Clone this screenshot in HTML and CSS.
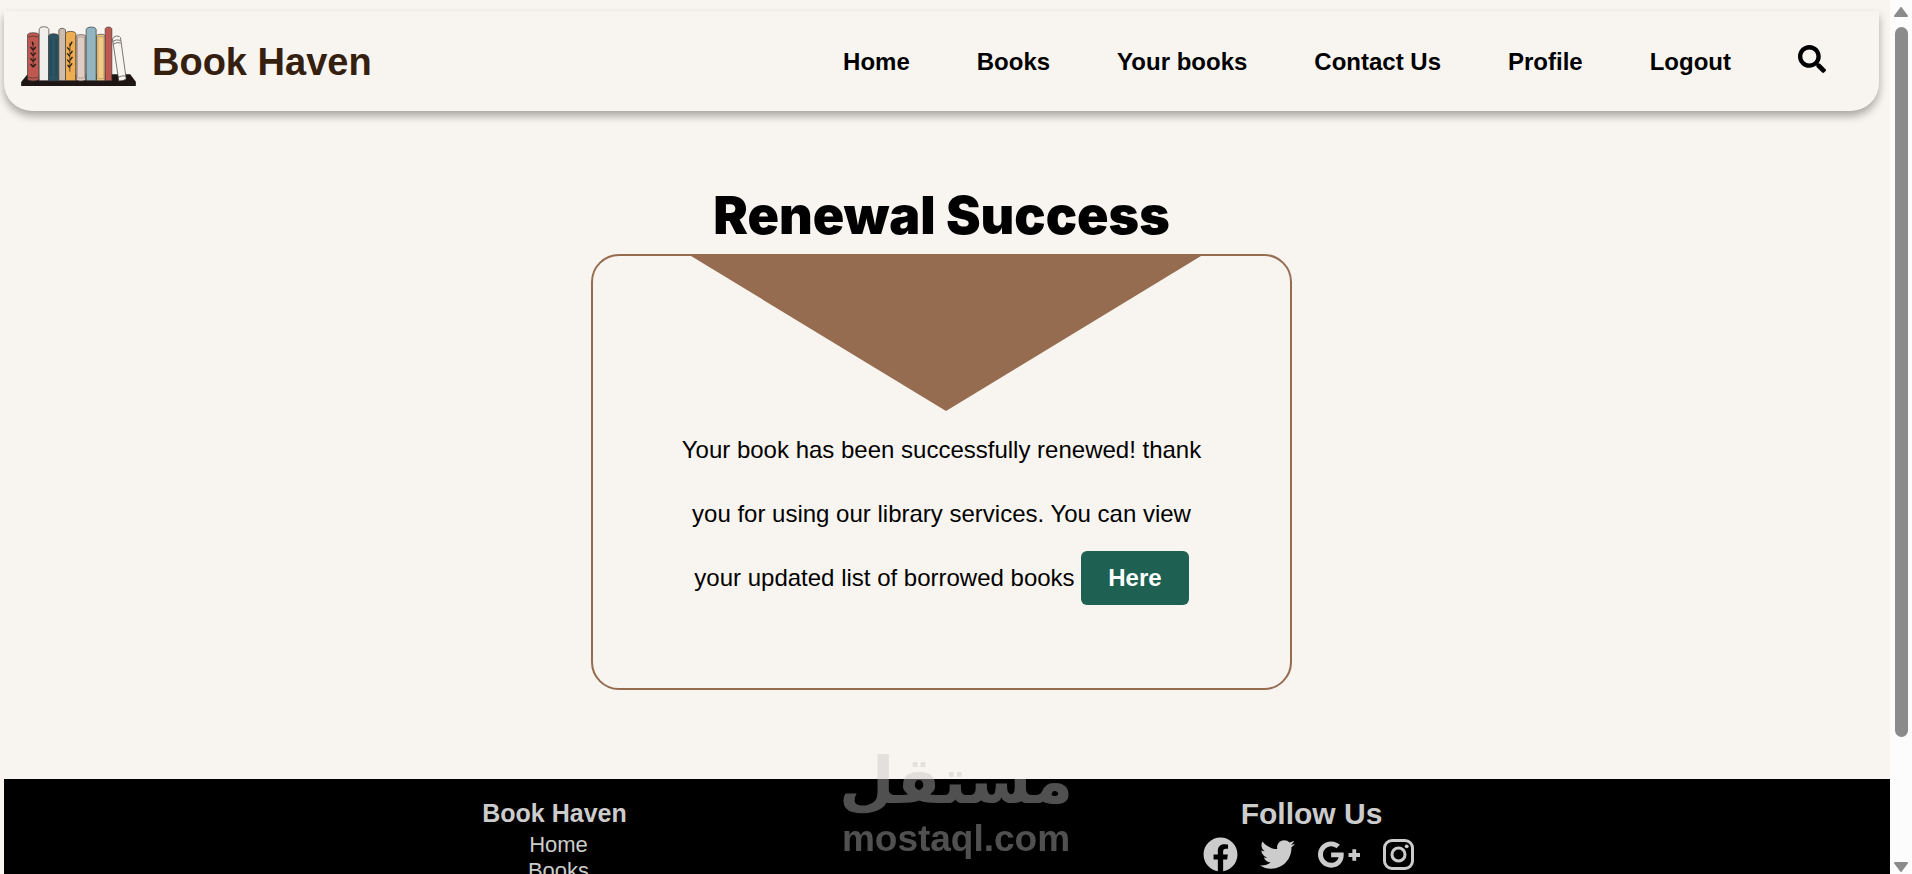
FILE: index.html
```html
<!DOCTYPE html>
<html lang="en">
<head>
    <meta charset="UTF-8">
    <meta name="viewport" content="width=device-width, initial-scale=1.0">
    <title>Book Haven - Renewal Success</title>
    <link rel="stylesheet" href="styles.css">
</head>
<body>
<div class="page">
    <header class="navbar">
        <a class="brand" href="#">
            <svg class="logo" viewBox="60 75 350 186" aria-hidden="true">
                <path d="M82 223H390L407 245V258H63V246Z" fill="#1d1615"/>
                <g stroke="#3b3534" stroke-width="2">
                    <path d="M82 104Q84 98 99 98T117 104V238Q112 243 99 243T82 238Z" fill="#bf5850"/>
                    <path d="M117 88Q118 80 131 80T146 88V242H117Z" fill="#f1efec"/>
                    <path d="M145 108Q147 101 160 101T176 108V243H145Z" fill="#2b5260"/>
                    <path d="M176 90Q178 85 186 85T196 90V242H176Z" fill="#cbbcae"/>
                    <path d="M196 100Q198 94 211 94T227 100V242H196Z" fill="#eead50"/>
                    <path d="M228 108Q230 104 242 104T257 108V240Q252 243 242 243T228 240Z" fill="#ddcdc5"/>
                    <path d="M258 88Q260 81 273 81T288 88V242H258Z" fill="#92b5c1"/>
                    <path d="M289 107Q291 103 302 103T315 107V242H289Z" fill="#f2cc82"/>
                    <path d="M315 86Q317 81 325 81T335 86V242H315Z" fill="#bf5850"/>
                    <path d="M337 117Q341 108 350 108T361 113L378 236Q374 242 356 243Z" fill="#f8f5f1"/>
                </g>
                <g fill="none" stroke="#3b3534" stroke-width="2">
                    <path d="M84 111Q99 106 115 111M84 232Q99 237 115 232M338 124Q348 117 361 121M340 132Q350 125 362 129M353 232Q364 226 376 228"/>
                    <path d="M232 111H253V234H232ZM293 110H311V236H293Z" stroke="#a58d74"/>
                    <path d="M152 118V228M168 118V228" stroke="#16404d"/>
                </g>
                <g fill="none" stroke="#241b18" stroke-width="4">
                    <path d="M99 128V202M209 128V215" stroke-width="2"/>
                    <path d="M99 135L96 125M99 150L91 141M99 150L107 141M99 167L91 158M99 167L107 158M99 184L91 175M99 184L107 175M99 201L91 192M99 201L107 192"/>
                    <path d="M209 138L216 125M209 151L201 142M209 163L217 153M209 169L201 160M209 181L217 171M209 188L201 179M209 199L216 190M209 203L202 195"/>
                </g>
            </svg>
            <span>Book Haven</span>
        </a>
        <nav class="nav-links">
            <a href="#">Home</a>
            <a href="#">Books</a>
            <a href="#">Your books</a>
            <a href="#">Contact Us</a>
            <a href="#">Profile</a>
            <a href="#">Logout</a>
            <a class="search" href="#" aria-label="Search">
                <svg viewBox="0 0 512 512"><path d="M505 442.7L405.3 343c-4.5-4.5-10.6-7-17-7H372c27.6-35.3 44-79.7 44-128C416 93.1 322.9 0 208 0S0 93.1 0 208s93.1 208 208 208c48.3 0 92.7-16.4 128-44v16.3c0 6.4 2.5 12.5 7 17l99.7 99.7c9.4 9.4 24.6 9.4 33.9 0l28.3-28.3c9.4-9.4 9.4-24.6.1-34zM208 336c-70.7 0-128-57.2-128-128 0-70.7 57.2-128 128-128 70.7 0 128 57.2 128 128 0 70.7-57.2 128-128 128z"/></svg>
            </a>
        </nav>
    </header>

    <main class="content">
        <h1>Renewal Success</h1>
        <section class="envelope">
            <div class="flap"></div>
            <p>Your book has been successfully renewed! thank you for using our library services. You can view your updated list of borrowed books <a class="here-btn" href="#">Here</a></p>
        </section>
    </main>

    <footer class="footer">
        <div class="footer-links">
            <h3>Book Haven</h3>
            <a href="#">Home</a>
            <a href="#">Books</a>
        </div>
        <div class="follow">
            <h2>Follow Us</h2>
            <div class="social">
                <a href="#" aria-label="Facebook">
                    <svg width="35" height="35" viewBox="0 0 512 512"><path d="M504 256C504 119 393 8 256 8S8 119 8 256c0 123.78 90.69 226.38 209.25 245V327.69h-63V256h63v-54.64c0-62.15 37-96.48 93.67-96.48 27.14 0 55.52 4.84 55.52 4.84v61h-31.28c-30.8 0-40.41 19.12-40.41 38.73V256h68.78l-11 71.69h-57.78V501C413.31 482.38 504 379.78 504 256z"/></svg>
                </a>
                <a href="#" aria-label="Twitter">
                    <svg width="35" height="35" viewBox="0 0 512 512"><path d="M459.37 151.716c.325 4.548.325 9.097.325 13.645 0 138.72-105.583 298.558-298.558 298.558-59.452 0-114.68-17.219-161.137-47.106 8.447.974 16.568 1.299 25.34 1.299 49.055 0 94.213-16.568 130.274-44.832-46.132-.975-84.792-31.188-98.112-72.772 6.498.974 12.995 1.624 19.818 1.624 9.421 0 18.843-1.3 27.614-3.573-48.081-9.747-84.143-51.98-84.143-102.985v-1.299c13.969 7.797 30.214 12.67 47.431 13.319-28.264-18.843-46.781-51.005-46.781-87.391 0-19.492 5.197-37.36 14.294-52.954 51.655 63.675 129.3 105.258 216.365 109.807-1.624-7.797-2.599-15.918-2.599-24.04 0-57.828 46.782-104.934 104.934-104.934 30.213 0 57.502 12.67 76.67 33.137 23.715-4.548 46.456-13.32 66.599-25.34-7.798 24.366-24.366 44.833-46.132 57.827 21.117-2.273 41.584-8.122 60.426-16.243-14.292 20.791-32.161 39.308-52.628 54.253z"/></svg>
                </a>
                <a href="#" aria-label="Google Plus">
                    <svg width="44" height="35" viewBox="0 0 640 512"><path d="M386.061 228.496c1.834 9.692 3.143 19.384 3.143 31.956C389.204 370.205 315.599 448 204.8 448c-106.084 0-192-85.915-192-192s85.916-192 192-192c51.864 0 95.083 18.859 128.611 50.292l-52.126 50.03c-14.145-13.621-39.028-29.599-76.485-29.599-65.484 0-118.92 54.221-118.92 121.277 0 67.056 53.436 121.277 118.92 121.277 75.961 0 104.513-54.745 108.965-82.773H204.8v-66.009h181.261zm185.406 6.437V179.2h-56.001v55.733h-55.733v56.001h55.733v55.733h56.001v-55.733H627.2v-56.001h-55.733z"/></svg>
                </a>
                <a href="#" aria-label="Instagram">
                    <svg width="31" height="35" viewBox="0 0 31 35"><g fill="none" stroke="#ccc" stroke-width="3"><rect x="1.5" y="3.5" width="28" height="28" rx="7.5"/><circle cx="15.5" cy="17.5" r="6.5"/></g><circle cx="23.7" cy="9.3" r="1.9"/></svg>
                </a>
            </div>
        </div>
    </footer>
</div>

<div class="scrollbar" aria-hidden="true">
    <svg viewBox="0 0 14 10"><path d="M7 1L13 9H1Z"/></svg>
    <div class="track"><div class="thumb"></div></div>
    <svg viewBox="0 0 14 10"><path d="M7 9L13 1H1Z"/></svg>
</div>

<div class="watermark">
    <span class="watermark-ar" lang="ar">مستقل</span>
    <span class="watermark-en">mostaql.com</span>
</div>
</body>
</html>
```
FILE: styles.css
```css
* {
    box-sizing: border-box;
}
body {
    margin: 0;
    height: 100vh;
    display: flex;
    overflow: hidden;
    background-color: #f8f4ef;
    font-family: Arial, "Liberation Sans", sans-serif;
    color: #000;
}
a {
    color: inherit;
    text-decoration: none;
}
.page {
    flex: 1;
    height: 100vh;
    overflow-y: auto;
    scrollbar-width: none;
    padding: 11px 0 0 4px;
}
.navbar {
    display: flex;
    justify-content: space-between;
    align-items: center;
    height: 100px;
    margin-right: 11px;
    padding: 2px 53px 0 16px;
    border-radius: 0 0 28px 28px;
    box-shadow: 0 5px 8px rgba(0, 0, 0, 0.32);
}
.brand {
    display: flex;
    align-items: center;
    gap: 15px;
    font-size: 38px;
    font-weight: bold;
    color: #35200f;
}
.logo {
    width: 117px;
    height: 62px;
    margin-bottom: 12px;
}
.nav-links {
    display: flex;
    align-items: center;
    gap: 67px;
    font-size: 24px;
    font-weight: bold;
}
.search svg {
    display: block;
    width: 28px;
    height: 28px;
    margin-bottom: 6px;
}
.content {
    margin-right: 11px;
    padding: 76px 0 89px;
}
h1 {
    margin: 0 0 10px;
    font-family: "Arial Black", Inter, sans-serif;
    font-size: 52px;
    font-weight: 900;
    line-height: 57px;
    text-align: center;
}
.envelope {
    max-width: 701px;
    height: 436px;
    margin: 0 auto;
    border: 2px solid #956c50;
    border-radius: 28px;
}
.flap {
    width: 510px;
    height: 155px;
    margin-left: 98px;
    background-color: #956c50;
    clip-path: polygon(0 0, 100% 0, 50% 100%);
}
.envelope p {
    max-width: 550px;
    margin: 7px auto 0;
    font-size: 24px;
    line-height: 64px;
    text-align: center;
}
.here-btn {
    display: inline-block;
    padding: 15px 27px;
    border-radius: 6px;
    background-color: #1e6152;
    color: #fff;
    font-weight: bold;
    line-height: 24px;
}
.footer {
    display: grid;
    grid-template-columns: 1fr 1fr;
    height: 300px;
    padding: 20px 200px 0 172px;
    background-color: #000;
    color: #ccc;
    text-align: center;
}
.footer-links a {
    display: block;
    padding-left: 8px;
    font-size: 22px;
    line-height: 26px;
}
.footer-links h3 {
    margin: 0 0 5px;
    font-size: 25px;
    line-height: 28px;
}
.follow h2 {
    margin: 0 0 8px;
    font-size: 30px;
    line-height: 30px;
}
.social {
    display: flex;
    justify-content: center;
    gap: 22px;
    padding-right: 6px;
}
.social svg {
    display: block;
    fill: #ccc;
}
.scrollbar {
    display: flex;
    flex-direction: column;
    width: 22px;
    padding: 7px 4px 2px;
    background-color: #fcfcfc;
}
.scrollbar svg {
    width: 14px;
    height: 10px;
    fill: #8b8b8b;
    stroke: #8b8b8b;
    stroke-width: 2;
    stroke-linejoin: round;
}
.track {
    flex: 1;
    padding: 10px 0 0 1px;
}
.thumb {
    width: 13px;
    height: 85%;
    border-radius: 7px;
    background-color: #8b8b8b;
}
/* site mark lying over the page */
.watermark {
    position: fixed;
    left: 0;
    right: 0;
    bottom: 14px;
    display: flex;
    flex-direction: column;
    align-items: center;
    color: #c3c3c3;
    opacity: 0.41;
    font-weight: bold;
    pointer-events: none;
}
.watermark-ar {
    font-family: "DejaVu Sans", sans-serif;
    font-size: 64px;
    line-height: 74px;
}
.watermark-en {
    font-size: 37px;
    line-height: 42px;
}
```
